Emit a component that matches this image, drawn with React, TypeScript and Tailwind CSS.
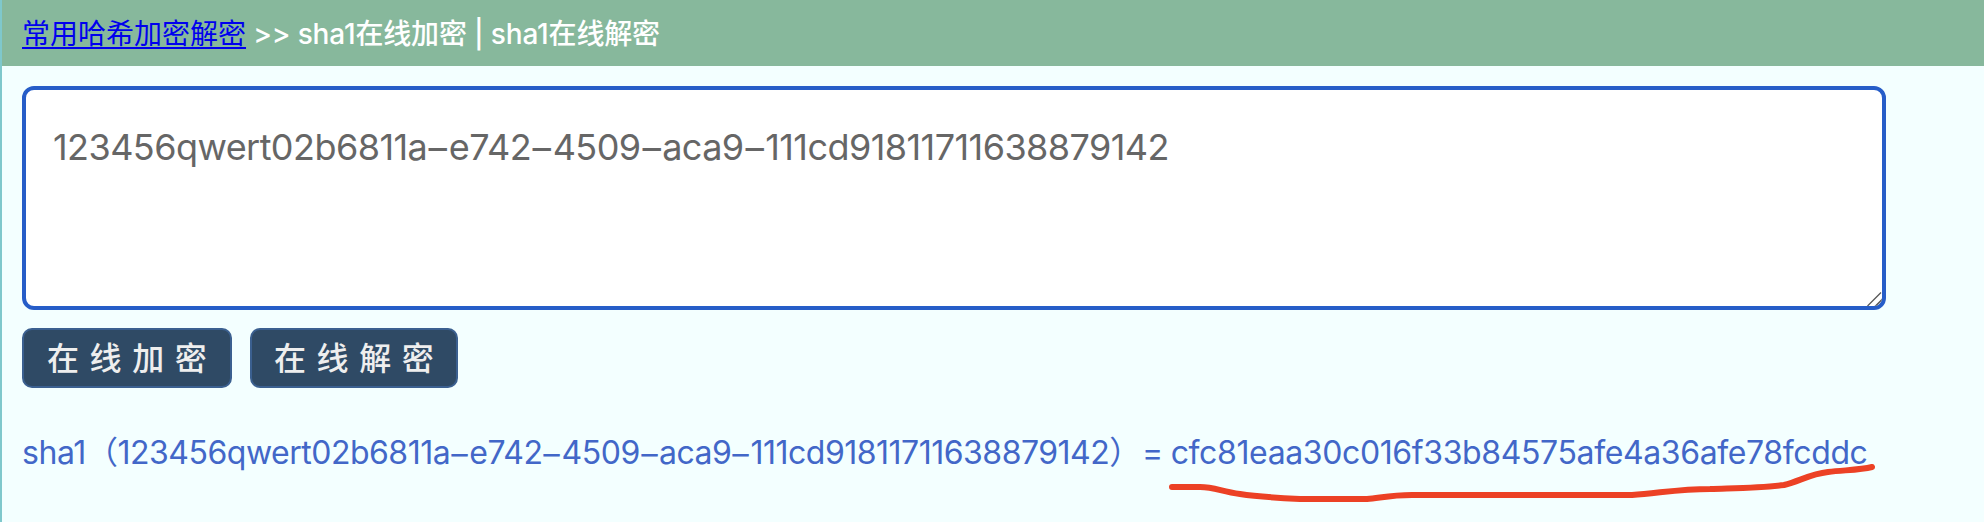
const PARTS = ["123456qwert02b6811a", "e742", "4509", "aca9", "111cd91811711638879142"];

function Source() {
  return (
    <>
      {PARTS.map((part, i) => (
        <span key={part}>
          {i > 0 && <span className="inline-block w-[0.6em] translate-y-px scale-x-[1.6] text-center tracking-normal">-</span>}
          {part}
        </span>
      ))}
    </>
  );
}

export default function App() {
  return (
    <div className="h-[522px] overflow-hidden border-l-2 border-[#7fc8cc] bg-[#f3ffff] font-['Inter','Noto_Sans_CJK_SC',sans-serif]">
      <header className="flex h-[66px] items-center whitespace-pre bg-[#87b89c] pl-5 pt-[2px] text-[28px] text-white">
        <a href="#" className="text-[#0000ee] underline decoration-2 underline-offset-[3px]">常用哈希加密解密</a>
        <span className="font-medium tracking-[-0.16px]"> &gt;&gt; sha1在线加密 | sha1在线解密</span>
      </header>
      <main className="pl-5 pt-5">
        <div
          role="textbox"
          className="relative h-[224px] w-[1864px] overflow-hidden rounded-xl border-4 border-[#265dc8] bg-white px-[27px] py-[33px] text-[36px] leading-[48px] tracking-[-0.56px] text-[#666]"
        >
          <Source />
          <svg className="absolute bottom-0 right-0 h-[15px] w-[15px]" viewBox="0 0 15 15" fill="none" stroke="#555" strokeWidth="1.3">
            <path d="M0.5 15 14 1.5" />
            <path d="M8.500 15 15 8.500V15Z" fill="#aeb9cc" />
          </svg>
        </div>
        <div className="mt-[18px] flex gap-[18px]">
          <button className="h-[60px] w-[210px] rounded-[10px] border-2 border-[#3b6090] bg-[#2f4a65] pl-[23px] pt-px text-left text-[32px] font-medium leading-[56px] tracking-[10.6px] text-[#eee]">在线加密</button>
          <button className="h-[60px] w-[208px] rounded-[10px] border-2 border-[#3b6090] bg-[#2f4a65] pl-[22px] pt-px text-left text-[32px] font-medium leading-[56px] tracking-[10.6px] text-[#eee]">在线解密</button>
        </div>
        <div className="relative mt-[41px] flex h-[48px] items-center whitespace-pre text-[32px] tracking-[-0.4px] text-[#4267c8]">
          <span>sha1（</span>
          <span className="tracking-[-0.5px]"><Source /></span>
          <span>）</span>
          <span className="pl-px pr-2">=</span>
          <span className="tracking-[-0.38px]">cfc81eaa30c016f33b84575afe4a36afe78fcddc</span>
          <svg className="absolute left-[1140px] top-[29px] h-[50px] w-[730px]" viewBox="1162 458 730 50" fill="none" stroke="#ec4125" strokeWidth="6" strokeLinecap="round" strokeLinejoin="round">
            <path d="M1172 487H1200C1215 487 1222 492 1240 494C1260 497 1280 498 1300 499H1367C1380 498 1390 495 1412 495H1632C1660 493 1680 489 1710 489C1740 488 1760 488 1784 485C1800 481 1810 474 1828 472C1845 470 1860 470 1872 467" />
          </svg>
        </div>
      </main>
    </div>
  );
}
